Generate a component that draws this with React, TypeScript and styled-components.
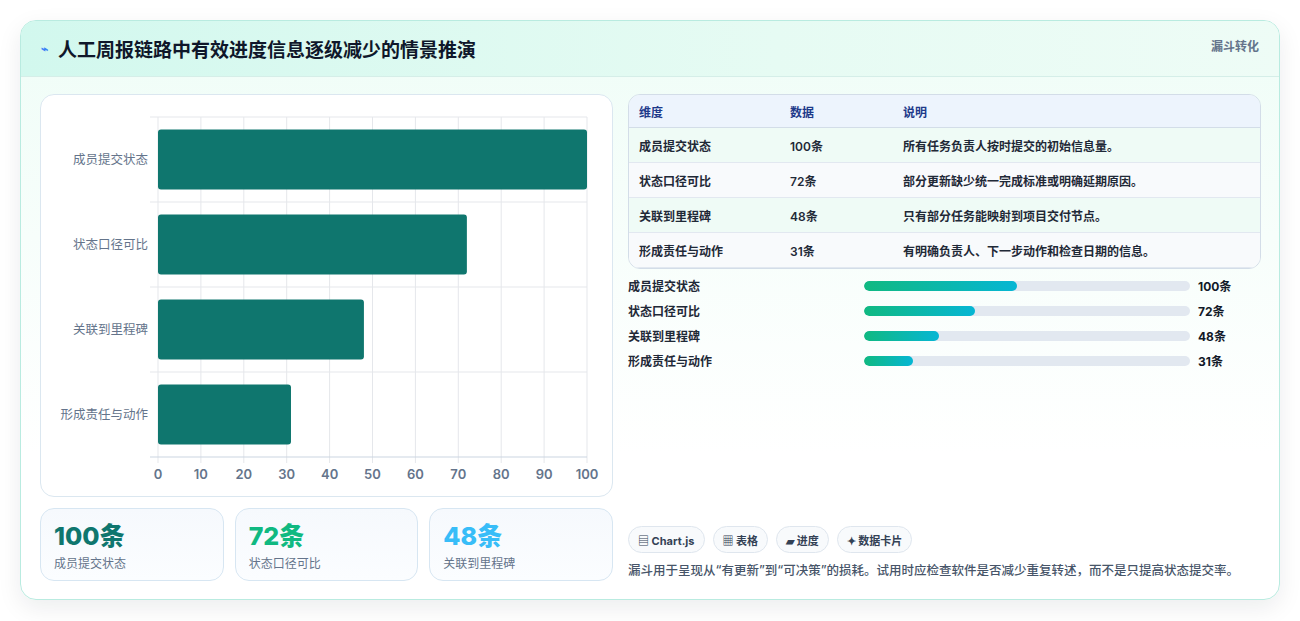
import React from "react";
import styled, { createGlobalStyle } from "styled-components";

const G = createGlobalStyle`
  body { margin:0; background:#fff; font-family: Inter, "Noto Sans CJK SC", sans-serif; }
`;
const Page = styled.div`padding:20px 20px 21px 20px; height:621px; box-sizing:border-box;`;
const Card = styled.div`
  height:580px; box-sizing:border-box; border:1px solid #b9ebe0; border-radius:16px; overflow:hidden;
  background: linear-gradient(180deg,#effdf7 0%,#ffffff 75%);
  box-shadow: 0 8px 24px rgba(15,23,42,0.08);
  display:flex; flex-direction:column;
`;
const Header = styled.div`
  height:55px; flex:none; display:flex; align-items:center; justify-content:space-between;
  padding:0 20px; border-bottom:1px solid #d5eee8;
  background: linear-gradient(90deg,#d2f8ee 0%,#e6fbf3 60%,#eefcf6 100%);
`;
const Title = styled.h1`margin:0; font-size:19px; font-weight:700; color:#0f172a; display:flex; align-items:center; gap:10px;`;
const Tag = styled.span`font-size:12px; font-weight:700; color:#64748b; align-self:flex-start; margin-top:16px;`;
const Body = styled.div`flex:1; display:grid; grid-template-columns:573px 633px; gap:15px; padding:17px 19px 19px 19px;`;
const Col = styled.div`display:flex; flex-direction:column; gap:11px; min-height:0;`;
const ChartBox = styled.div`height:403px; box-sizing:border-box; border:1px solid #dbe7f0; border-radius:14px; background:#fff;`;
const Stats = styled.div`display:grid; grid-template-columns:repeat(3,1fr); gap:11px;`;
const Stat = styled.div`height:73px; box-sizing:border-box; border:1px solid #d7e6f2; border-radius:14px; padding:11px 13px;
  background:linear-gradient(180deg,#f6f9fd,#fbfdff);`;
const StatNum = styled.div<{c:string}>`font-size:25px; font-weight:800; color:${p=>p.c}; line-height:32px;`;
const StatLbl = styled.div`font-size:12px; color:#64748b; margin-top:2px;`;
const Table = styled.table`width:100%; border-collapse:separate; border-spacing:0; border:1px solid #d3dde8; border-radius:12px; overflow:hidden; font-size:12px;`;
const Th = styled.th`text-align:left; font-weight:700; color:#1e3a8a; background:#edf4fd; height:32px; padding:0 10px; border-bottom:1px solid #d3dde8;`;
const Td = styled.td<{alt?:boolean}>`height:34px; padding:0 10px; color:#1f2937; font-weight:600; background:${p=>p.alt?"#f8fafc":"#effbf6"}; border-bottom:1px solid #e2e8f0;`;
const Bars = styled.div`display:flex; flex-direction:column; gap:8px; margin-top:8px;`;
const BarRow = styled.div`display:grid; grid-template-columns:236px 326px 1fr; align-items:center; gap:0; height:17px; font-size:12px; font-weight:600; color:#1f2937;`;
const Track = styled.div`height:10px; border-radius:5px; background:#e2e8f0; overflow:hidden;`;
const Fill = styled.div`height:100%; border-radius:5px; background:linear-gradient(90deg,#10b981,#06b6d4);`;
const Val = styled.span`padding-left:8px; font-weight:700; color:#111827;`;
const Spacer = styled.div`flex:1;`;
const Chips = styled.div`display:flex; gap:8px;`;
const Chip = styled.span`height:27px; box-sizing:border-box; border:1px solid #dfe6ee; border-radius:14px; background:#f8fafc; padding:0 9px; display:flex; align-items:center; font-size:11px; font-weight:700; color:#334155;`;
const Note = styled.p`margin:0; font-size:12.5px; line-height:20px; color:#475569; font-weight:500;`;

const rows = [
  ["成员提交状态", 100, "所有任务负责人按时提交的初始信息量。"],
  ["状态口径可比", 72, "部分更新缺少统一完成标准或明确延期原因。"],
  ["关联到里程碑", 48, "只有部分任务能映射到项目交付节点。"],
  ["形成责任与动作", 31, "有明确负责人、下一步动作和检查日期的信息。"],
] as const;
const fills = [47, 34, 23, 15];

function Chart() {
  const x0 = 117, x1 = 546, y0 = 22, y1 = 362;
  const band = (y1 - y0) / 4;
  return (
    <svg width="571" height="401" style={{ display: "block" }}>
      {Array.from({ length: 11 }).map((_, i) => {
        const x = x0 + (x1 - x0) * i / 10;
        return <g key={i}>
          <line x1={x} x2={x} y1={y0} y2={y1 + 6} stroke="#e5e7eb" />
          <text x={x} y={384} textAnchor="middle" fontSize="13" fill="#64748b" fontWeight="600" fontFamily="Inter">{i * 10}</text>
        </g>;
      })}
      {[0, 1, 2, 3, 4].map(i => <line key={i} x1={x0 - 8} x2={x1} y1={y0 + band * i} y2={y0 + band * i} stroke={i === 4 ? "#cbd5e1" : "#e5e7eb"} />)}
      {rows.map((r, i) => {
        const yc = y0 + band * i + band / 2;
        return <g key={i}>
          <rect x={x0} y={yc - 30} width={(x1 - x0) * r[1] / 100} height={60} rx={3} fill="#0f766e" />
          <text x={x0 - 10} y={yc + 4} textAnchor="end" fontSize="12.5" fill="#64748b" fontFamily="Noto Sans CJK SC">{r[0]}</text>
        </g>;
      })}
    </svg>
  );
}

export default function App() {
  return (
    <Page>
      <G />
      <Card>
        <Header>
          <Title><span style={{ color: "#3b82f6", fontSize: 12 }}>⌁</span>人工周报链路中有效进度信息逐级减少的情景推演</Title>
          <Tag>漏斗转化</Tag>
        </Header>
        <Body>
          <Col>
            <ChartBox><Chart /></ChartBox>
            <Stats>
              <Stat><StatNum c="#0f766e">100条</StatNum><StatLbl>成员提交状态</StatLbl></Stat>
              <Stat><StatNum c="#10b981">72条</StatNum><StatLbl>状态口径可比</StatLbl></Stat>
              <Stat><StatNum c="#38bdf8">48条</StatNum><StatLbl>关联到里程碑</StatLbl></Stat>
            </Stats>
          </Col>
          <Col style={{ gap: 0 }}>
            <Table>
              <thead><tr><Th style={{ width: 131 }}>维度</Th><Th style={{ width: 93 }}>数据</Th><Th>说明</Th></tr></thead>
              <tbody>
                {rows.map((r, i) => <tr key={i}><Td alt={i % 2 === 1}>{r[0]}</Td><Td alt={i % 2 === 1}>{r[1]}条</Td><Td alt={i % 2 === 1}>{r[2]}</Td></tr>)}
              </tbody>
            </Table>
            <Bars>
              {rows.map((r, i) => <BarRow key={i}><span>{r[0]}</span><Track><Fill style={{ width: `${fills[i]}%` }} /></Track><Val>{r[1]}条</Val></BarRow>)}
            </Bars>
            <Spacer />
            <Chips>
              <Chip>▤ Chart.js</Chip><Chip>▦ 表格</Chip><Chip>▰ 进度</Chip><Chip>✦ 数据卡片</Chip>
            </Chips>
            <Note style={{ marginTop: 8 }}>漏斗用于呈现从“有更新”到“可决策”的损耗。试用时应检查软件是否减少重复转述，而不是只提高状态提交率。</Note>
          </Col>
        </Body>
      </Card>
    </Page>
  );
}
